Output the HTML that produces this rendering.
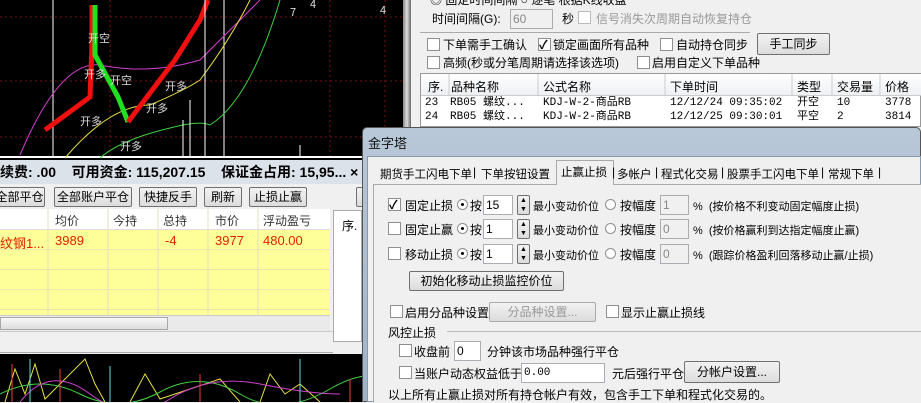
<!DOCTYPE html>
<html><head><meta charset="utf-8">
<style>
*{box-sizing:border-box;margin:0;padding:0}
body{width:921px;height:402px;overflow:hidden;position:relative;background:#f0f0f0;font-family:"Liberation Sans","Noto Sans CJK SC",sans-serif;font-size:12px;color:#000}
.a{position:absolute;white-space:nowrap}
.d{font-size:11px}
.t{font-size:11.5px}
.cb{position:absolute;width:13px;height:13px;border:1px solid #8f8f8f;background:#fff}
.cb.on::after{content:"✓";position:absolute;left:0;top:-3px;font-size:12px;font-weight:bold}
.rd{position:absolute;width:11px;height:11px;border:1px solid #8f8f8f;border-radius:50%;background:#fff}
.rd.on::after{content:"";position:absolute;left:3px;top:3px;width:3px;height:3px;background:#000;border-radius:50%}
.in{position:absolute;height:20px;border:1px solid #abadb3;background:#fff;padding-left:2px;font-size:12px;line-height:18px}
.in.dis{background:#f0f0f0;color:#888}
.btn{position:absolute;border:1px solid #707070;border-radius:2px;background:linear-gradient(#f2f2f2,#dcdcdc);text-align:center;line-height:18px;white-space:nowrap}
.mono{font-family:"Liberation Mono","Noto Sans CJK SC",monospace;font-size:11px;line-height:14px;height:14px;overflow:hidden}
</style></head><body>

<svg class="a" style="left:0;top:0" width="405" height="160">
<rect width="405" height="160" fill="#000"/>
<g stroke="#7a1010" stroke-dasharray="2,3">
<line x1="0" y1="17" x2="405" y2="17"/><line x1="0" y1="81" x2="405" y2="81"/><line x1="0" y1="137" x2="405" y2="137"/>
<line x1="110" y1="0" x2="110" y2="157"/><line x1="330" y1="0" x2="330" y2="157"/><line x1="385" y1="0" x2="385" y2="157"/>
</g>
<line x1="53" y1="0" x2="53" y2="157" stroke="#fff"/><line x1="224" y1="0" x2="224" y2="157" stroke="#fff"/>
<line x1="0" y1="157" x2="405" y2="157" stroke="#fff" stroke-width="2"/>
<path d="M20 155 Q60 60 100 65 Q150 75 200 60 Q230 30 260 0" stroke="#d040d0" fill="none"/>
<path d="M65 158 Q110 105 150 105 Q185 90 200 80 Q230 40 250 0" stroke="#e8e040" fill="none"/>
<path d="M100 158 Q120 140 170 128 Q200 120 210 125 Q250 100 280 0" stroke="#40d040" fill="none"/>
<path d="M45 130 L90 97 L92 45 L92 5" stroke="#f01010" stroke-width="5" fill="none"/>
<path d="M95 5 L95 55 L118 97 L128 122" stroke="#20e020" stroke-width="5" fill="none"/>
<path d="M128 122 L175 60 L200 20 L208 0" stroke="#f01010" stroke-width="5" fill="none"/>
<g fill="#ddd" font-size="11" font-family="Noto Sans CJK SC"><text x="88" y="42">开空</text><text x="84" y="78">开多</text><text x="110" y="84">开空</text><text x="80" y="125">开多</text><text x="146" y="112">开多</text><text x="165" y="90">开多</text><text x="120" y="150">开多</text><text x="290" y="16">7</text><text x="310" y="8">4</text><text x="380" y="14">4</text></g>
<g stroke="#fff"><line x1="190" y1="100" x2="190" y2="157"/><line x1="205" y1="0" x2="205" y2="157"/><line x1="183" y1="120" x2="183" y2="157"/><line x1="300" y1="145" x2="300" y2="157"/></g>
</svg>
<div class="a" style="left:403px;top:0;width:8px;height:402px;background:linear-gradient(90deg,#888,#ddd,#666)"></div>

<div class="a" style="left:0;top:160px;width:362px;height:24px;background:#dbe2ea;font-weight:bold;font-size:14px;line-height:24px">续费: .00&nbsp;&nbsp;&nbsp;&nbsp;可用资金: 115,207.15&nbsp;&nbsp;&nbsp;&nbsp;保证金占用: 15,95... ×</div>
<div class="a" style="left:0;top:184px;width:362px;height:25px;background:#f0f0f0"></div>
<div class="btn" style="left:-6px;top:187px;width:51px;height:20px">全部平仓</div>
<div class="btn" style="left:54px;top:187px;width:78px;height:20px">全部账户平仓</div>
<div class="btn" style="left:139px;top:187px;width:58px;height:20px">快捷反手</div>
<div class="btn" style="left:204px;top:187px;width:38px;height:20px">刷新</div>
<div class="btn" style="left:249px;top:187px;width:58px;height:20px">止损止赢</div>
<div class="btn" style="left:356px;top:187px;width:10px;height:20px"></div>
<div class="a" style="left:0;top:209px;width:330px;height:21px;background:#fff;border-bottom:1px solid #ddd;color:#333">
<span class="a" style="left:55px;top:3px">均价</span><span class="a" style="left:113px;top:3px">今持</span><span class="a" style="left:163px;top:3px">总持</span><span class="a" style="left:215px;top:3px">市价</span><span class="a" style="left:263px;top:3px">浮动盈亏</span></div>
<div class="a" style="left:0;top:230px;width:330px;height:85px;background-image:repeating-linear-gradient(#ffff99 0 19px,#e8e8b0 19px 20px)"></div>
<svg class="a" style="left:0;top:209px" width="330" height="106"><g stroke="#e0e0c0"><line x1="48" y1="0" x2="48" y2="106"/><line x1="108" y1="0" x2="108" y2="106"/><line x1="158" y1="0" x2="158" y2="106"/><line x1="208" y1="0" x2="208" y2="106"/><line x1="258" y1="0" x2="258" y2="106"/></g></svg>
<div class="a" style="left:0;top:233px;color:#e02000;font-size:13px">纹钢1...<span class="a" style="left:55px">3989</span><span class="a" style="left:165px">-4</span><span class="a" style="left:215px">3977</span><span class="a" style="left:263px">480.00</span></div>
<div class="a" style="left:0;top:315px;width:330px;height:16px;background:#eaeaea;border-top:1px solid #ccc"><div class="a" style="left:0;top:1px;width:168px;height:13px;background:linear-gradient(#f8f8f8,#ddd);border:1px solid #aaa"></div></div>
<div class="a" style="left:333px;top:210px;width:29px;height:132px;background:#fff;border:1px solid #aaa"><span class="a" style="left:8px;top:6px">序.</span></div>
<div class="a" style="left:0;top:331px;width:333px;height:22px;background:#f0f0f0;border-top:1px solid #ccc;border-bottom:1px solid #aaa"></div>
<svg class="a" style="left:0;top:354px" width="403" height="48"><rect width="403" height="48" fill="#000"/>
<path d="M5 48 L15 15 L25 40 L35 10 L45 45 L85 5 L95 30 L105 48 M130 48 L145 20 L160 45 L220 25 L240 48 M260 48 L270 20 L285 40 L300 30 L320 48" stroke="#e8e040" fill="none"/>
<path d="M0 40 Q40 20 80 40 T160 38 T240 40 T330 35 T403 40" stroke="#40d040" fill="none"/>
<path d="M20 48 Q50 10 90 40 T170 45 T260 30 T340 40" stroke="#d040d0" fill="none"/>
<g stroke="#f04040"><line x1="12" y1="10" x2="12" y2="48"/><line x1="60" y1="15" x2="60" y2="48"/><line x1="200" y1="20" x2="200" y2="48"/><line x1="350" y1="25" x2="350" y2="48"/></g>
<g stroke="#60e0e0"><line x1="30" y1="5" x2="30" y2="48"/><line x1="110" y1="12" x2="110" y2="48"/><line x1="300" y1="5" x2="300" y2="48"/></g>
</svg>

<div class="a" style="left:411px;top:0;width:510px;height:127px;background:#f0f0f0"></div>
<div class="a" style="left:430px;top:-9px">◎ 固定时间间隔 ○ 逐笔 根据K线收盘</div>
<div class="a" style="left:432px;top:10px">时间间隔(G):</div>
<div class="in dis" style="left:510px;top:9px;width:43px">60</div>
<div class="a" style="left:562px;top:10px">秒</div><div class="cb" style="left:578px;top:11px;border-color:#bbb"></div>
<div class="a" style="left:596px;top:10px;color:#999">信号消失次周期自动恢复持仓</div>
<div class="a" style="left:420px;top:32px;width:330px;height:1px;background:#aaa"></div>
<div class="cb" style="left:427px;top:38px"></div><div class="a" style="left:443px;top:36px">下单需手工确认</div>
<div class="cb on" style="left:538px;top:38px"></div><div class="a" style="left:553px;top:36px">锁定画面所有品种</div>
<div class="cb" style="left:660px;top:38px"></div><div class="a" style="left:676px;top:36px">自动持仓同步</div>
<div class="btn" style="left:757px;top:33px;width:73px;height:22px;line-height:20px">手工同步</div>
<div class="cb" style="left:427px;top:56px"></div><div class="a" style="left:443px;top:54px">高频(秒或分笔周期请选择该选项)</div>
<div class="cb" style="left:637px;top:56px"></div><div class="a" style="left:652px;top:54px">启用自定义下单品种</div>
<div class="a" style="left:420px;top:73px;width:501px;height:54px;background:#fff;border:1px solid #999"></div>
<div class="a" style="left:421px;top:74px;width:500px;height:22px;background:linear-gradient(#fff,#eef0f4);border-bottom:1px solid #ccc"></div>
<svg class="a" style="left:420px;top:74px" width="501" height="22"><g stroke="#ccc"><line x1="29" y1="0" x2="29" y2="22"/><line x1="118" y1="0" x2="118" y2="22"/><line x1="245" y1="0" x2="245" y2="22"/><line x1="372" y1="0" x2="372" y2="22"/><line x1="412" y1="0" x2="412" y2="22"/><line x1="460" y1="0" x2="460" y2="22"/></g></svg>
<div class="a" style="left:428px;top:78px">序.</div><div class="a" style="left:451px;top:78px">品种名称</div><div class="a" style="left:543px;top:78px">公式名称</div><div class="a" style="left:670px;top:78px">下单时间</div><div class="a" style="left:797px;top:78px">类型</div><div class="a" style="left:837px;top:78px">交易量</div><div class="a" style="left:885px;top:78px">价格</div>
<div class="a mono" style="left:425px;top:96px">23</div><div class="a mono" style="left:450px;top:96px">RB05 螺纹...</div><div class="a mono" style="left:543px;top:96px">KDJ-W-2-商品RB</div><div class="a mono" style="left:670px;top:96px">12/12/24 09:35:02</div><div class="a mono" style="left:797px;top:96px">开空</div><div class="a mono" style="left:837px;top:96px">10</div><div class="a mono" style="left:885px;top:96px">3778</div>
<div class="a mono" style="left:425px;top:110px">24</div><div class="a mono" style="left:450px;top:110px">RB05 螺纹...</div><div class="a mono" style="left:543px;top:110px">KDJ-W-2-商品RB</div><div class="a mono" style="left:670px;top:110px">12/12/25 09:30:01</div><div class="a mono" style="left:797px;top:110px">平空</div><div class="a mono" style="left:837px;top:110px">2</div><div class="a mono" style="left:885px;top:110px">3814</div>

<div class="a" style="left:362px;top:127px;width:559px;height:275px;background:linear-gradient(#b8c8d8,#9fb3c8);border:1px solid #555;border-radius:5px 5px 0 0"></div>
<div class="a" style="left:368px;top:133px;font-size:13px;color:#111">金字塔</div>
<div class="a" style="left:367px;top:156px;width:554px;height:246px;background:#f0f0f0;border:1px solid #8899aa"></div>
<div class="a" style="left:373px;top:184px;width:548px;height:218px;border:1px solid #aaa;border-right:none;border-bottom:none;background:#f0f0f0"></div>
<div class="a" style="left:556px;top:160px;width:58px;height:25px;background:#f0f0f0;border:1px solid #aaa;border-bottom:none"></div>
<div class="a t" style="left:380px;top:166px">期货手工闪电下单</div><div class="a" style="left:473px;top:165px">|</div>
<div class="a t" style="left:481px;top:166px">下单按钮设置</div>
<div class="a t" style="left:561px;top:164px">止赢止损</div><div class="a" style="left:612px;top:165px">|</div>
<div class="a t" style="left:617px;top:166px">多帐户</div><div class="a" style="left:655px;top:165px">|</div>
<div class="a t" style="left:661px;top:166px">程式化交易</div><div class="a" style="left:721px;top:165px">|</div>
<div class="a t" style="left:727px;top:166px">股票手工闪电下单</div><div class="a" style="left:821px;top:165px">|</div>
<div class="a t" style="left:828px;top:166px">常规下单</div><div class="a" style="left:878px;top:165px">|</div>

<div class="cb on" style="left:388px;top:198px"></div><div class="a" style="left:405px;top:197px">固定止损</div>
<div class="cb" style="left:388px;top:222px"></div><div class="a" style="left:405px;top:221px">固定止赢</div>
<div class="cb" style="left:388px;top:247px"></div><div class="a" style="left:405px;top:246px">移动止损</div>
<div class="rd on" style="left:457px;top:199px"></div><div class="rd on" style="left:457px;top:223px"></div><div class="rd on" style="left:457px;top:248px"></div>
<div class="a" style="left:470px;top:197px">按</div><div class="a" style="left:470px;top:221px">按</div><div class="a" style="left:470px;top:246px">按</div>
<div class="in" style="left:483px;top:195px;width:30px">15</div><div class="in" style="left:483px;top:219px;width:30px">1</div><div class="in" style="left:483px;top:244px;width:30px">1</div>
<div class="btn" style="left:517px;top:195px;width:13px;height:20px;font-size:7px;line-height:9px">▲<br>▼</div><div class="btn" style="left:517px;top:219px;width:13px;height:20px;font-size:7px;line-height:9px">▲<br>▼</div><div class="btn" style="left:517px;top:244px;width:13px;height:20px;font-size:7px;line-height:9px">▲<br>▼</div>
<div class="a d" style="left:533px;top:198px">最小变动价位</div><div class="a d" style="left:533px;top:222px">最小变动价位</div><div class="a d" style="left:533px;top:247px">最小变动价位</div>
<div class="rd" style="left:605px;top:199px"></div><div class="rd" style="left:605px;top:223px"></div><div class="rd" style="left:605px;top:248px"></div>
<div class="a" style="left:620px;top:197px">按幅度</div><div class="a" style="left:620px;top:221px">按幅度</div><div class="a" style="left:620px;top:246px">按幅度</div>
<div class="in dis" style="left:660px;top:195px;width:29px">1</div><div class="in dis" style="left:660px;top:219px;width:29px">0</div><div class="in dis" style="left:660px;top:244px;width:29px">0</div>
<div class="a d" style="left:693px;top:198px">%&nbsp;&nbsp;(按价格不利变动固定幅度止损)</div>
<div class="a d" style="left:693px;top:222px">%&nbsp;&nbsp;(按价格赢利到达指定幅度止赢)</div>
<div class="a d" style="left:693px;top:247px">%&nbsp;&nbsp;(跟踪价格盈利回落移动止赢/止损)</div>
<div class="btn" style="left:409px;top:271px;width:155px;height:20px">初始化移动止损监控价位</div>
<div class="cb" style="left:390px;top:305px"></div><div class="a" style="left:405px;top:304px">启用分品种设置</div>
<div class="btn" style="left:489px;top:302px;width:107px;height:20px;color:#999;border-color:#aaa">分品种设置...</div>
<div class="cb" style="left:606px;top:305px"></div><div class="a" style="left:621px;top:304px">显示止赢止损线</div>
<div class="a" style="left:388px;top:324px">风控止损</div><div class="a" style="left:447px;top:331px;width:474px;height:1px;background:#bbb"></div>
<div class="cb" style="left:399px;top:344px"></div><div class="a" style="left:414px;top:343px">收盘前</div>
<div class="in" style="left:454px;top:341px;width:27px">0</div><div class="a" style="left:487px;top:343px">分钟该市场品种强行平仓</div>
<div class="cb" style="left:399px;top:366px"></div><div class="a" style="left:414px;top:365px">当账户动态权益低于</div>
<div class="in mono" style="left:521px;top:363px;width:84px;height:20px;line-height:18px">0.00</div><div class="a" style="left:612px;top:365px">元后强行平仓</div>
<div class="btn" style="left:684px;top:361px;width:96px;height:22px;line-height:20px">分帐户设置...</div>
<div class="a" style="left:388px;top:386px">以上所有止赢止损对所有持仓帐户有效，包含手工下单和程式化交易的。</div>
</body></html>
